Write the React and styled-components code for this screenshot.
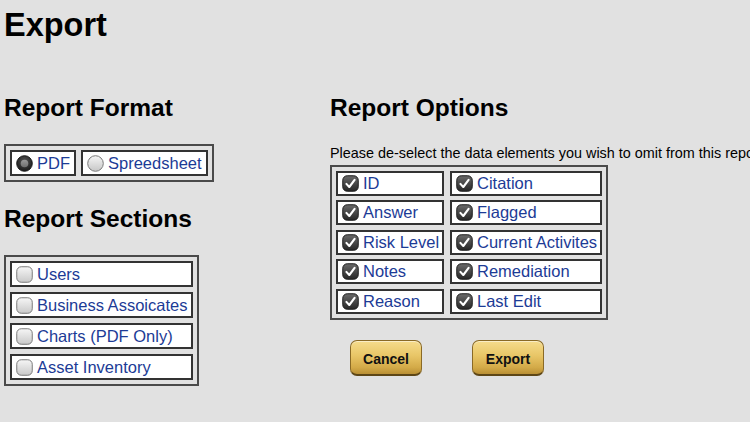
import React from "react";
import styled, { createGlobalStyle } from "styled-components";

const GlobalStyle = createGlobalStyle`
  html, body {
    margin: 0;
    padding: 0;
    overflow: hidden;
    background: #e1e1e1;
  }
  * {
    box-sizing: border-box;
  }
`;

const Page = styled.div`
  width: 750px;
  height: 422px;
  padding: 6px 0 0 4px;
  background: #e1e1e1;
  font-family: "Liberation Sans", Arial, Helvetica, sans-serif;
  color: #000;
`;

const Title = styled.h1`
  margin: 0;
  font-size: 32.5px;
  line-height: 38px;
  font-weight: 700;
`;

const Columns = styled.div`
  display: flex;
  margin-top: 50px;
`;

const LeftColumn = styled.div`
  width: 326px;
  flex-shrink: 0;
  display: flex;
  flex-direction: column;
  align-items: flex-start;
`;

const RightColumn = styled.div`
  flex: 1;
  min-width: 0;
  display: flex;
  flex-direction: column;
  align-items: flex-start;
`;

const Heading = styled.h2`
  margin: ${(props) => (props.$spaced ? "23px" : "0")} 0 22px 0;
  font-size: 24.5px;
  line-height: 28px;
  font-weight: 700;
`;

const Hint = styled.div`
  margin-top: 1px;
  font-size: 14.4px;
  line-height: 16px;
  white-space: nowrap;
`;

const Panel = styled.div`
  border: 2px solid #4a4a4a;
  padding: 4px;
  display: ${(props) => (props.$row ? "flex" : "grid")};
  gap: 5px;
`;

const OptionsPanel = styled.div`
  margin-top: 3.5px;
  border: 2px solid #4a4a4a;
  padding: 4px;
  display: grid;
  grid-template-columns: 108px 152px;
  grid-auto-rows: 25px;
  column-gap: 6px;
  row-gap: 4.5px;
`;

const Item = styled.div`
  display: flex;
  align-items: center;
  gap: 4px;
  height: ${(props) => props.$height || 26}px;
  width: ${(props) => (props.$width ? props.$width + "px" : "auto")};
  padding: 0 4px 0 4px;
  border: 2px solid #333;
  background: #fff;
  color: #1c3b96;
  font-size: 16.5px;
  white-space: nowrap;
`;

const Buttons = styled.div`
  display: flex;
  gap: 50px;
  margin-top: 20px;
  padding-left: 20px;
`;

const GoldButton = styled.button`
  width: 72px;
  height: 36px;
  border-radius: 7px;
  border: 1px solid #8a6a26;
  border-bottom: 2px solid #5d4616;
  background: linear-gradient(#f6dc8c 0%, #e8c566 45%, #d3aa48 80%, #b98f34 100%);
  box-shadow: inset 0 1px 0 rgba(255, 255, 255, 0.5);
  font-family: "Liberation Sans", Arial, Helvetica, sans-serif;
  font-size: 14px;
  font-weight: 700;
  color: #111;
  padding: 3px 0 0 0;
`;

const Checkbox = ({ checked }) => (
  <svg width="17" height="17" viewBox="0 0 17 17" style={{ flexShrink: 0 }}>
    <defs>
      <linearGradient id="cbDark" x1="0" y1="0" x2="0" y2="1">
        <stop offset="0" stopColor="#6a6a6a" />
        <stop offset="1" stopColor="#262626" />
      </linearGradient>
      <linearGradient id="cbLight" x1="0" y1="0" x2="0" y2="1">
        <stop offset="0" stopColor="#f6f6f6" />
        <stop offset="1" stopColor="#c9c9c9" />
      </linearGradient>
    </defs>
    <rect
      x="0.75"
      y="0.75"
      width="15.5"
      height="15.5"
      rx="4.5"
      fill={checked ? "url(#cbDark)" : "url(#cbLight)"}
      stroke={checked ? "#1e1e1e" : "#7a7a7a"}
      strokeWidth="1"
    />
    {checked && (
      <path
        d="M4.4 8.9 L7.3 12 L12.6 4.9"
        fill="none"
        stroke="#fff"
        strokeWidth="2.1"
        strokeLinecap="round"
        strokeLinejoin="round"
      />
    )}
  </svg>
);

const Radio = ({ selected }) => (
  <svg width="17" height="17" viewBox="0 0 17 17" style={{ flexShrink: 0 }}>
    <defs>
      <radialGradient id="rdDark" cx="0.5" cy="0.35" r="0.6">
        <stop offset="0" stopColor="#555" />
        <stop offset="1" stopColor="#1e1e1e" />
      </radialGradient>
      <linearGradient id="rdLight" x1="0" y1="0" x2="0" y2="1">
        <stop offset="0" stopColor="#f6f6f6" />
        <stop offset="1" stopColor="#c6c6c6" />
      </linearGradient>
      <linearGradient id="rdDot" x1="0" y1="0" x2="0" y2="1">
        <stop offset="0" stopColor="#9a9a9a" />
        <stop offset="1" stopColor="#6e6e6e" />
      </linearGradient>
    </defs>
    <circle
      cx="8.5"
      cy="8.5"
      r="7.8"
      fill={selected ? "url(#rdDark)" : "url(#rdLight)"}
      stroke={selected ? "#1a1a1a" : "#7a7a7a"}
      strokeWidth="1"
    />
    {selected && <circle cx="8.5" cy="8.5" r="3.8" fill="url(#rdDot)" />}
  </svg>
);

const sections = ["Users", "Business Assoicates", "Charts (PDF Only)", "Asset Inventory"];

const options = [
  "ID",
  "Citation",
  "Answer",
  "Flagged",
  "Risk Level",
  "Current Activites",
  "Notes",
  "Remediation",
  "Reason",
  "Last Edit",
];

const App = () => {
  return (
    <Page>
      <GlobalStyle />
      <Title>Export</Title>
      <Columns>
        <LeftColumn>
          <Heading>Report Format</Heading>
          <Panel $row>
            <Item>
              <Radio selected />
              PDF
            </Item>
            <Item>
              <Radio />
              Spreedsheet
            </Item>
          </Panel>
          <Heading $spaced>Report Sections</Heading>
          <Panel>
            {sections.map((item) => (
              <Item key={item} $width={183} $height={26}>
                <Checkbox />
                {item}
              </Item>
            ))}
          </Panel>
        </LeftColumn>
        <RightColumn>
          <Heading>Report Options</Heading>
          <Hint>
            Please de-select the data elements you wish to omit from this report.
          </Hint>
          <OptionsPanel>
            {options.map((item) => (
              <Item key={item} $height={25}>
                <Checkbox checked />
                {item}
              </Item>
            ))}
          </OptionsPanel>
          <Buttons>
            <GoldButton>Cancel</GoldButton>
            <GoldButton>Export</GoldButton>
          </Buttons>
        </RightColumn>
      </Columns>
    </Page>
  );
};

export default App;
